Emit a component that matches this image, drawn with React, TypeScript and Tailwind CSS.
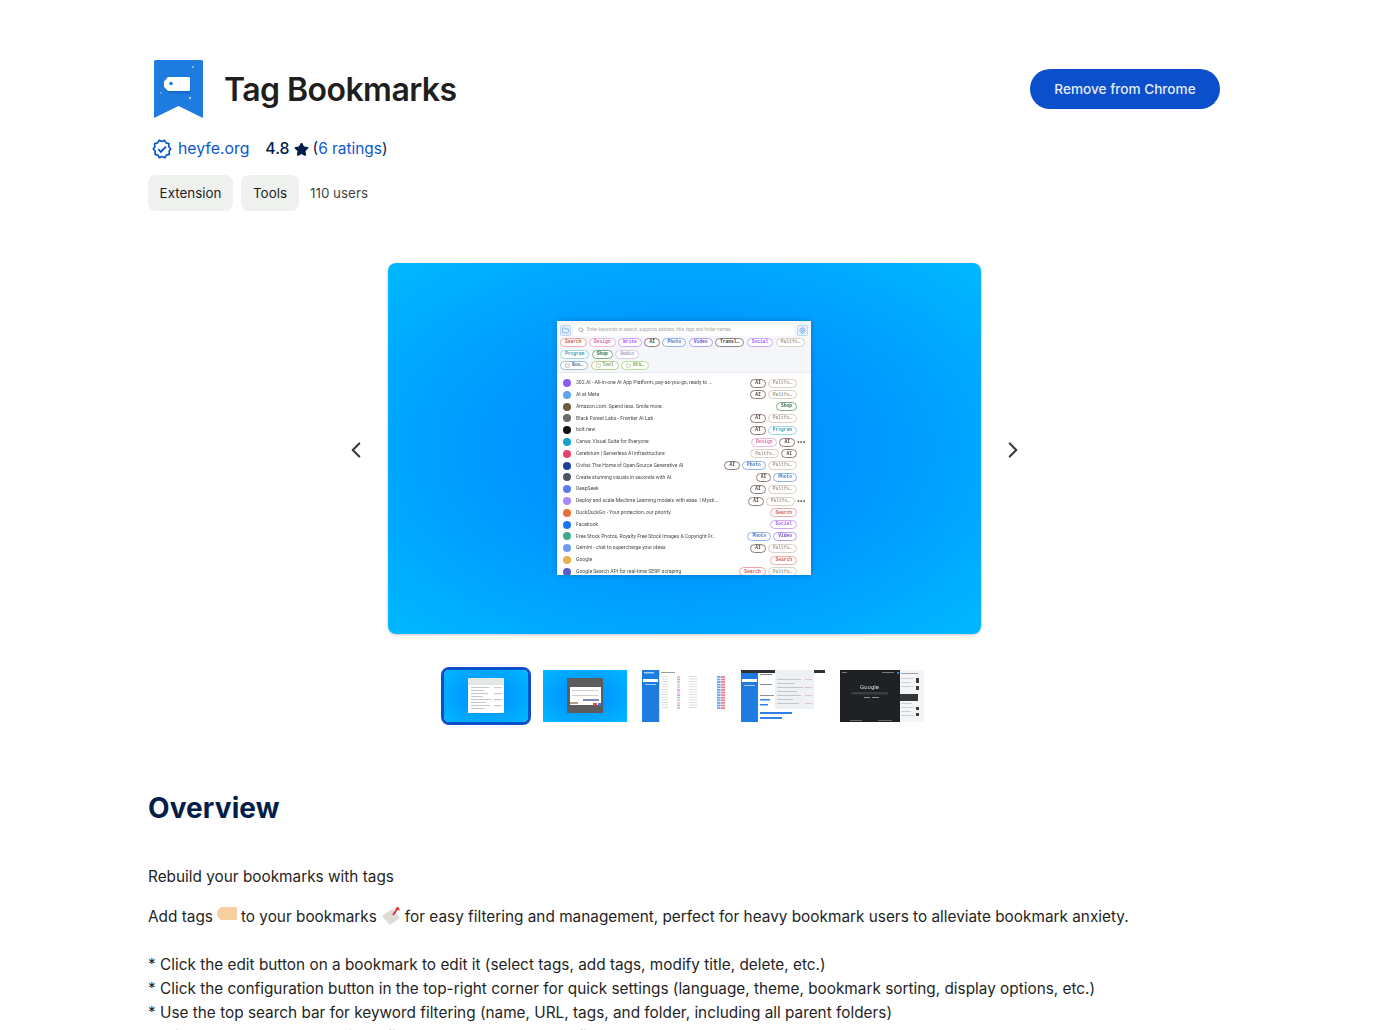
import { ChevronLeft, ChevronRight, Search, Folder, Settings, Star } from 'lucide-react';

type Tag = { label: string; color: string };

const pink = 'border-[#f0a8a8] text-[#d9534f]';
const design = 'border-[#f3b6d8] text-[#d86aa8]';
const violet = 'border-[#d0a8f5] text-[#a855f7]';
const ai = 'border-[#8d7c74] text-[#4b3d36]';
const blue = 'border-[#8fb4e8] text-[#3f72c4]';
const video = 'border-[#b59cf5] text-[#6d3fe0]';
const trans = 'border-[#8c8590] text-[#3c3540]';
const pale = 'border-[#d9d0c8] text-[#a89c90]';
const teal = 'border-[#9fd8e6] text-[#3f9fb8]';
const green = 'border-[#7fae8c] text-[#2f6b45]';
const lilac = 'border-[#d6cbe0] text-[#a695b8]';
const folderBlue = 'border-[#9ec3d8] text-[#4a7290]';
const olive = 'border-[#bcd08a] text-[#7f9a3f]';
const lime = 'border-[#b8de9a] text-[#6fa84a]';

const T = {
  search: { label: 'Search', color: pink },
  design: { label: 'Design', color: design },
  ai: { label: 'AI', color: ai },
  photo: { label: 'Photo', color: blue },
  video: { label: 'Video', color: video },
  social: { label: 'Social', color: violet },
  paltfo: { label: 'Paltfo…', color: pale },
  program: { label: 'Program', color: teal },
  shop: { label: 'Shop', color: green },
};

const filterRows: Tag[][] = [
  [
    T.search,
    T.design,
    { label: 'Write', color: violet },
    T.ai,
    T.photo,
    T.video,
    { label: 'Transl…', color: trans },
    T.social,
    T.paltfo,
  ],
  [T.program, T.shop, { label: 'Audio', color: lilac }],
];

const folders: Tag[] = [
  { label: 'Boo…', color: folderBlue },
  { label: 'Tool', color: olive },
  { label: 'Oth…', color: lime },
];

const bookmarks: { title: string; icon: string; tags: Tag[]; more?: boolean }[] = [
  { title: '302.AI - All-in-one AI App Platform, pay-as-you-go, ready to …', icon: 'bg-[#8b5cf6]', tags: [T.ai, T.paltfo] },
  { title: 'AI at Meta', icon: 'bg-[#5ba4f0]', tags: [T.ai, T.paltfo] },
  { title: 'Amazon.com. Spend less. Smile more.', icon: 'bg-[#6b5a3c]', tags: [T.shop] },
  { title: 'Black Forest Labs - Frontier AI Lab', icon: 'bg-[#6a6a6a]', tags: [T.ai, T.paltfo] },
  { title: 'bolt.new', icon: 'bg-[#111111]', tags: [T.ai, T.program] },
  { title: 'Canva: Visual Suite for Everyone', icon: 'bg-[#14a3c7]', tags: [T.design, T.ai], more: true },
  { title: 'Cerebrium | Serverless AI infrastructure', icon: 'bg-[#ec3f6e]', tags: [T.paltfo, T.ai] },
  { title: 'Civitai: The Home of Open-Source Generative AI', icon: 'bg-[#1f3f9a]', tags: [T.ai, T.photo, T.paltfo] },
  { title: 'Create stunning visuals in seconds with AI.', icon: 'bg-[#4b5563]', tags: [T.ai, T.photo] },
  { title: 'DeepSeek', icon: 'bg-[#5b7cf0]', tags: [T.ai, T.paltfo] },
  { title: 'Deploy and scale Machine Learning models with ease. | Mysti…', icon: 'bg-[#a78bfa]', tags: [T.ai, T.paltfo], more: true },
  { title: 'DuckDuckGo - Your protection, our priority.', icon: 'bg-[#e8703a]', tags: [T.search] },
  { title: 'Facebook', icon: 'bg-[#1877f2]', tags: [T.social] },
  { title: 'Free Stock Photos, Royalty Free Stock Images & Copyright Fr…', icon: 'bg-[#3fa98c]', tags: [T.photo, T.video] },
  { title: 'Gemini - chat to supercharge your ideas', icon: 'bg-[#6f9cf0]', tags: [T.ai, T.paltfo] },
  { title: 'Google', icon: 'bg-[#e8b04a]', tags: [T.search] },
  { title: 'Google Search API for real-time SERP scraping', icon: 'bg-[#5560c8]', tags: [T.search, T.paltfo] },
];

function MiniTag({ tag, folder }: { tag: Tag; folder?: boolean }) {
  return (
    <span
      className={`flex h-[9px] shrink-0 items-center gap-[2px] rounded-full border-[0.8px] bg-white px-[4px] font-['Liberation_Mono',monospace] text-[4.6px] font-bold leading-none ${tag.color}`}
    >
      {folder && <Folder className="size-[5px]" />}
      {tag.label}
    </span>
  );
}

function MiniPopup() {
  return (
    <div className="mb-[1px] flex h-[254px] w-[254px] flex-col overflow-hidden bg-white shadow-[0_0_6px_rgba(0,0,0,0.25)] blur-[0.35px]">
      <div className="flex flex-col gap-[2.5px] border-b border-[#e6e9ee] bg-[#f4f6f9] px-[3px] pb-[1.5px] pt-[3.5px]">
        <div className="flex items-center gap-[3px]">
          <span className="flex size-[11px] items-center justify-center rounded-[2px] border-[0.7px] border-[#bcd6f5] bg-[#e6f0fb]">
            <Folder className="size-[7px] text-[#4f8fdc]" />
          </span>
          <span className="flex h-[11px] flex-1 items-center gap-[3px] rounded-[2px] bg-white px-[4px] font-['Roboto',sans-serif] text-[4.5px] text-[#a5a8ad]">
            <Search className="size-[6px] text-[#777777]" />
            Enter keywords to search, supports address, title, tags and folder names
          </span>
          <span className="flex size-[11px] items-center justify-center rounded-[2px] border-[0.7px] border-[#bcd6f5] bg-[#e6f0fb]">
            <Settings className="size-[7px] text-[#4f8fdc]" />
          </span>
        </div>
        {filterRows.map((row, i) => (
          <div key={i} className="flex gap-[2.5px]">
            {row.map((tag) => (
              <MiniTag key={tag.label} tag={tag} />
            ))}
          </div>
        ))}
        <div className="flex gap-[2.5px]">
          {folders.map((tag) => (
            <MiniTag key={tag.label} tag={tag} folder />
          ))}
        </div>
      </div>
      <div className="flex flex-col pt-[4.7px]">
        {bookmarks.map((b) => (
          <div key={b.title} className="flex h-[11.8px] shrink-0 items-center pl-[6px] pr-[14px]">
            <span className={`size-[8px] shrink-0 rounded-full ${b.icon}`} />
            <span className="ml-[5px] min-w-0 flex-1 truncate font-['Roboto',sans-serif] text-[5.1px] text-[#4a4a4a]">{b.title}</span>
            <span className="flex items-center gap-[2px]">
              {b.tags.map((tag) => (
                <MiniTag key={tag.label} tag={tag} />
              ))}
              {b.more && <span className="w-0 text-[6px] font-bold leading-none text-[#444444]">•••</span>}
            </span>
          </div>
        ))}
      </div>
    </div>
  );
}

function Logo() {
  return (
    <svg viewBox="0 0 49 59" className="h-[59px] w-[49px]">
      <path d="M1.500 0h46a1.500 1.500 0 0 1 1.500 1.500V58L24.500 46 0 58V1.500A1.500 1.500 0 0 1 1.500 0z" fill="#1e7be0" />
      <path d="M11 24l4-4.500h20a1.500 1.500 0 0 1 1.500 1.500v11a1.500 1.500 0 0 1-1.500 1.500H15l-4-4z" fill="#0f5fb8" opacity="0.5" />
      <path d="M10 21.500l4-4.500h20.500a1.500 1.500 0 0 1 1.500 1.500v11a1.500 1.500 0 0 1-1.500 1.500H14l-4-4z" fill="#ffffff" />
      <circle cx="17" cy="23.500" r="1.800" fill="#1e7be0" />
      <circle cx="39" cy="7" r="1" fill="#a8cdf5" />
      <circle cx="36" cy="38" r="1.200" fill="#a8cdf5" />
      <circle cx="7" cy="33" r="0.800" fill="#a8cdf5" />
    </svg>
  );
}

function VerifiedBadge() {
  return (
    <svg viewBox="0 0 24 24" className="size-5 fill-none stroke-[#0b57d0]" strokeWidth={2}>
      <path d="m22.500 12-2.440-2.790.34-3.690-3.610-.82-1.890-3.200L12 2.960 8.600 1.500 6.710 4.690 3.100 5.500l.34 3.700L1.500 12l2.440 2.790-.34 3.700 3.610.82L8.600 22.500l3.400-1.470 3.400 1.460 1.890-3.190 3.610-.82-.34-3.690L22.500 12z" strokeLinejoin="round" />
      <path d="m7.500 12.200 3.200 3.200 6-6.200" strokeWidth={2.400} />
    </svg>
  );
}

function PeachTag() {
  return (
    <svg viewBox="0 0 20 15" className="mx-[4px] inline-block h-[15px] w-[20px] align-[1px]">
      <path d="M0 5 4 1h15a1 1 0 0 1 1 1v11a1 1 0 0 1-1 1H4L0 10z" fill="#f8cf9f" />
      <circle cx="3" cy="7.500" r="1" fill="#ffffff" stroke="#c9a57c" strokeWidth="0.400" />
    </svg>
  );
}

function PinnedTag() {
  return (
    <svg viewBox="0 0 20 20" className="mx-[4px] inline-block h-[20px] w-[20px] align-[-3px]">
      <path d="M1 11 11 4l8 9-10 7z" fill="#dedad5" />
      <path d="M12 10 17 3" stroke="#e0303c" strokeWidth="2" />
      <path d="M14 3l5 3-1.500-4z" fill="#e0303c" />
    </svg>
  );
}

function ThumbPopup() {
  return (
    <svg viewBox="0 0 84 52" className="block h-[52px] w-[84px] blur-[0.4px]">
      <defs>
        <radialGradient id="tg" cx="50%" cy="50%" r="70%">
          <stop offset="0%" stopColor="#0088ff" />
          <stop offset="100%" stopColor="#00b8ff" />
        </radialGradient>
      </defs>
      <rect width="84" height="52" fill="url(#tg)" />
      <rect x="24" y="8" width="36" height="35" fill="#ffffff" />
      <rect x="24" y="8" width="36" height="7" fill="#e3e8e4" />
      <g fill="#b4b8bf">
        <rect x="27" y="17" width="18" height="0.800" />
        <rect x="27" y="20" width="13" height="0.800" />
        <rect x="27" y="23" width="17" height="0.800" />
        <rect x="27" y="26" width="12" height="0.800" />
        <rect x="27" y="29" width="20" height="0.800" />
        <rect x="27" y="32" width="15" height="0.800" />
        <rect x="27" y="35" width="19" height="0.800" />
        <rect x="27" y="38" width="14" height="0.800" />
      </g>
      <g fill="#d8c8c0">
        <rect x="50" y="17" width="8" height="1.200" />
        <rect x="50" y="23" width="8" height="1.200" />
        <rect x="50" y="29" width="8" height="1.200" />
        <rect x="50" y="35" width="8" height="1.200" />
      </g>
    </svg>
  );
}

function ThumbDialog() {
  return (
    <svg viewBox="0 0 84 52" className="block h-[52px] w-[84px] blur-[0.4px]">
      <defs>
        <radialGradient id="tg2" cx="50%" cy="50%" r="70%">
          <stop offset="0%" stopColor="#0088ff" />
          <stop offset="100%" stopColor="#00b8ff" />
        </radialGradient>
      </defs>
      <rect width="84" height="52" fill="url(#tg2)" />
      <rect x="24" y="8" width="36" height="35" fill="#5c5c5c" />
      <rect x="27" y="17" width="31" height="18" fill="#ffffff" />
      <rect x="29" y="20" width="26" height="1" fill="#d0d0d0" />
      <rect x="29" y="25" width="26" height="1" fill="#d0d0d0" />
      <rect x="40" y="29" width="16" height="2" fill="#8088b8" />
      <rect x="27" y="32" width="8" height="2" fill="#b8a090" />
      <rect x="50" y="33" width="4" height="2.500" fill="#e8503a" />
      <rect x="55" y="33" width="3" height="2.500" fill="#3b82f6" />
    </svg>
  );
}

function ThumbTable() {
  const rows = [0, 1, 2, 3, 4, 5, 6, 7, 8, 9, 10, 11, 12];
  const chips = ['#f5b5c5', '#c7a6f0', '#a8d0f0', '#b6e0c0', '#f0c0e0', '#c0b0f0'];
  return (
    <svg viewBox="0 0 84 52" className="block h-[52px] w-[84px] blur-[0.4px]">
      <rect width="84" height="52" fill="#ffffff" />
      <rect width="17" height="52" fill="#1e7be0" />
      <rect x="17" width="1" height="52" fill="#cfe2f8" />
      <rect x="1" y="9" width="15" height="3" fill="#ffffff" />
      <rect x="2" y="2" width="10" height="1.500" fill="#a8cdf5" />
      <rect x="3" y="14" width="11" height="1" fill="#a8cdf5" />
      <rect x="19" y="2" width="14" height="1" fill="#9aa0a8" />
      {rows.map((r) => (
        <g key={r}>
          <rect x="20" y={6 + r * 2.6} width="6" height="0.800" fill="#d0d3d8" />
          <rect x="35" y={6 + r * 2.6} width="3" height="1.800" fill={chips[r % 6]} />
          <rect x="47" y={6 + r * 2.6} width="8" height="0.800" fill="#d8dadd" />
          <rect x="75" y={6 + r * 2.6} width="3.500" height="1.800" fill="#6aa5ea" />
          <rect x="79" y={6 + r * 2.6} width="4" height="1.800" fill="#f47f8a" />
        </g>
      ))}
    </svg>
  );
}

function ThumbSettings() {
  return (
    <svg viewBox="0 0 84 52" className="block h-[52px] w-[84px] blur-[0.4px]">
      <rect width="84" height="52" fill="#ffffff" />
      <rect width="84" height="3" fill="#2d3138" />
      <rect y="3" width="17" height="49" fill="#1e7be0" />
      <rect x="1" y="9" width="15" height="3" fill="#ffffff" />
      <rect x="3" y="15" width="11" height="1" fill="#a8cdf5" />
      <rect x="19" y="4" width="12" height="1" fill="#7f8690" />
      <rect x="19" y="14" width="12" height="1" fill="#7f8690" />
      <rect x="19" y="25" width="14" height="1" fill="#8c929a" />
      <rect x="19" y="29" width="10" height="1.500" fill="#2f80e8" />
      <rect x="19" y="34" width="8" height="1.500" fill="#2f80e8" />
      <rect x="19" y="42" width="32" height="2" fill="#2f80e8" />
      <rect x="19" y="47" width="22" height="2" fill="#2f80e8" />
      <rect x="34" y="0" width="39" height="39" fill="#eef1f4" />
      <g fill="#b8bcc4">
        <rect x="36" y="9" width="24" height="0.800" />
        <rect x="36" y="13" width="18" height="0.800" />
        <rect x="36" y="17" width="26" height="0.800" />
        <rect x="36" y="21" width="20" height="0.800" />
        <rect x="36" y="25" width="24" height="0.800" />
        <rect x="36" y="29" width="16" height="0.800" />
        <rect x="36" y="33" width="22" height="0.800" />
      </g>
      <g fill="#e8c4c8">
        <rect x="64" y="9" width="7" height="1" />
        <rect x="64" y="17" width="7" height="1" />
        <rect x="64" y="25" width="7" height="1" />
        <rect x="64" y="33" width="7" height="1" />
      </g>
    </svg>
  );
}

function ThumbDark() {
  return (
    <svg viewBox="0 0 84 52" className="block h-[52px] w-[84px] blur-[0.4px]">
      <rect width="84" height="52" fill="#202124" />
      <rect x="60" width="24" height="52" fill="#f4f5f7" />
      <text x="20" y="19" fontSize="6" fontFamily="Roboto, sans-serif" fill="#d8dadc">Google</text>
      <rect x="11" y="22" width="37" height="2.500" rx="1.200" fill="#3a3d42" />
      <rect x="24" y="27" width="6" height="1" fill="#8a8d92" />
      <rect x="32" y="27" width="7" height="1" fill="#8a8d92" />
      <rect x="2" y="2" width="5" height="1" fill="#777a7e" />
      <rect x="42" y="2" width="12" height="1" fill="#777a7e" />
      <rect x="57" y="2" width="2" height="2" fill="#2f80e8" />
      <rect x="10" y="50" width="12" height="0.800" fill="#777a7e" />
      <rect x="38" y="50" width="14" height="0.800" fill="#777a7e" />
      <rect x="61" y="3" width="17" height="1" fill="#9aa0a8" />
      <g fill="#c4c8cf">
        <rect x="61" y="8" width="12" height="0.800" />
        <rect x="61" y="12" width="10" height="0.800" />
        <rect x="61" y="16" width="13" height="0.800" />
        <rect x="61" y="33" width="11" height="0.800" />
        <rect x="61" y="37" width="12" height="0.800" />
        <rect x="61" y="41" width="10" height="0.800" />
        <rect x="61" y="45" width="13" height="0.800" />
      </g>
      <g fill="#3b3b3f">
        <rect x="76" y="8" width="3" height="5" />
        <rect x="76" y="16" width="3" height="4" />
        <rect x="76" y="37" width="3" height="3" />
        <rect x="76" y="43" width="3" height="3" />
      </g>
      <rect x="60" y="24" width="18" height="7" fill="#34363a" />
    </svg>
  );
}

export default function App() {
  return (
    <div className="h-[1030px] overflow-hidden bg-white font-['Inter',sans-serif] text-[#1f1f1f]">
      <div className="ml-[148px] w-[1072px] pt-[60px]">
        <header className="flex items-start justify-between">
          <div className="flex h-[59px] items-center pl-[6px]">
            <Logo />
            <h1 className="ml-[21px] text-[32px] font-semibold leading-10 tracking-[-0.55px]">Tag Bookmarks</h1>
          </div>
          <button className="mt-[9px] h-10 w-[190px] rounded-full bg-[#0b4fcb] text-[13.6px] font-medium text-[#e6edfb]">
            Remove from Chrome
          </button>
        </header>

        <div className="mt-[16px] flex h-7 items-center pl-1 text-[15.8px]">
          <VerifiedBadge />
          <span className="ml-[6px] text-[#0b57d0]">heyfe.org</span>
          <span className="ml-[16px] font-medium text-[#041e49]">4.8</span>
          <Star className="ml-1 size-[15px] fill-[#041e49] text-[#041e49]" />
          <span className="ml-[4px] text-[15.4px] text-[#041e49]">
            (<span className="text-[#0b57d0]">6 ratings</span>)
          </span>
        </div>

        <div className="mt-[12px] flex items-center gap-2 text-[13.4px]">
          <span className="flex h-9 w-[85px] items-center justify-center rounded-lg bg-[#eff1ef]">Extension</span>
          <span className="flex h-9 w-[58px] items-center justify-center rounded-lg bg-[#eff1ef]">Tools</span>
          <span className="ml-[3px] text-[#444746]">110 users</span>
        </div>

        <section className="mt-[52px] flex items-center justify-center gap-[19px]">
          <ChevronLeft className="mt-[2px] size-[26px] text-[#3c3c3c]" strokeWidth={2} />
          <div className="flex h-[371px] w-[593px] items-center justify-center rounded-lg bg-[radial-gradient(ellipse_at_center,#0088ff_0%,#0098ff_45%,#00b8ff_100%)] shadow-[0_1px_3px_rgba(60,64,67,0.3)]">
            <MiniPopup />
          </div>
          <ChevronRight className="mt-[2px] size-[26px] text-[#3c3c3c]" strokeWidth={2} />
        </section>

        <div className="ml-[293px] mt-[33px] flex items-center">
          <div className="overflow-hidden rounded-lg border-[3px] border-[#0b4fcb]">
            <ThumbPopup />
          </div>
          <div className="ml-[12px] flex gap-[15px]">
            <ThumbDialog />
            <ThumbTable />
            <ThumbSettings />
            <ThumbDark />
          </div>
        </div>

        <h2 className="mt-[65px] text-[28px] font-bold leading-9 tracking-[0.1px] text-[#041e49]">Overview</h2>

        <div className="mt-[39px] text-[15.35px] leading-6">
          <p>Rebuild your bookmarks with tags</p>
          <p className="mt-4">
            Add tags
            <PeachTag />
            to your bookmarks
            <PinnedTag />
            for easy filtering and management, perfect for heavy bookmark users to alleviate bookmark anxiety.
          </p>
          <p className="mt-6">* Click the edit button on a bookmark to edit it (select tags, add tags, modify title, delete, etc.)</p>
          <p>* Click the configuration button in the top-right corner for quick settings (language, theme, bookmark sorting, display options, etc.)</p>
          <p>* Use the top search bar for keyword filtering (name, URL, tags, and folder, including all parent folders)</p>
          <p>* Click on a tag above to quickly filter bookmarks by tag or file</p>
        </div>
      </div>
    </div>
  );
}
